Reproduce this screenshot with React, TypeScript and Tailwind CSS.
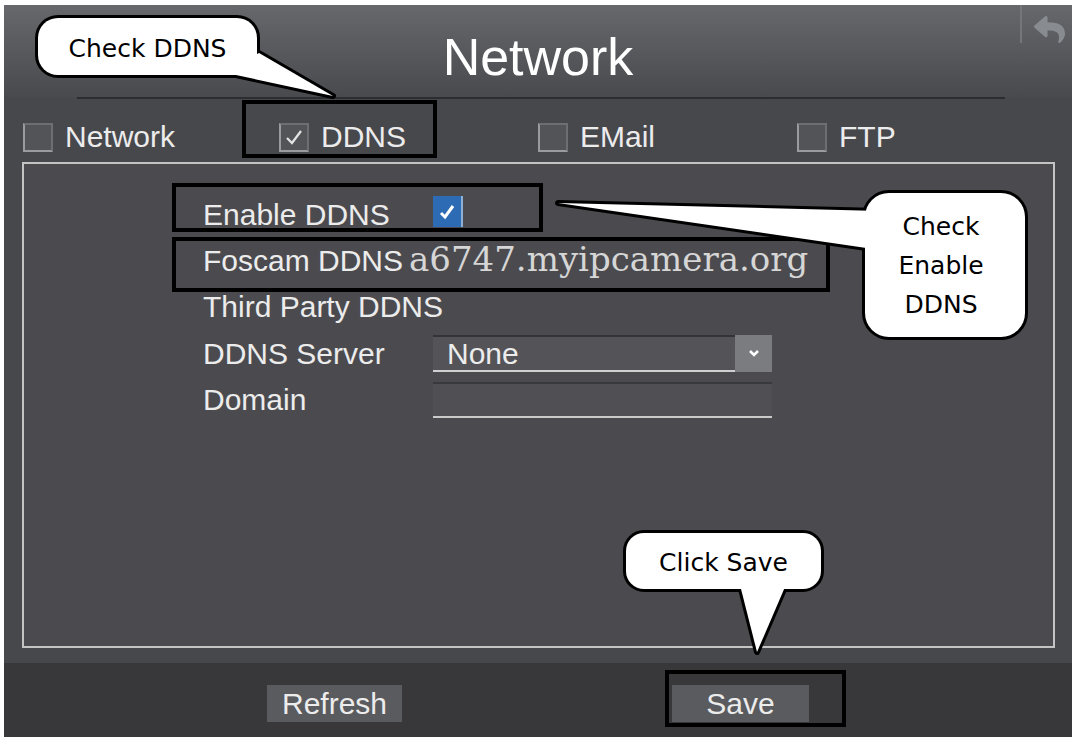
import { FaReply } from 'react-icons/fa';

// shared label style for the device UI text
const label = "font-['Liberation_Sans',Arial,sans-serif] text-[30px] leading-none text-[#ececec] whitespace-nowrap";
const callout = "font-['DejaVu_Sans',Verdana,sans-serif] text-[25px] leading-none text-black whitespace-nowrap";

function TabBox({ checked }: { checked?: boolean }) {
  return (
    <div className="flex h-[29px] w-[30px] shrink-0 items-center justify-center border-2 border-[#6d6e72] border-b-[#9a9b9f] border-l-[#9a9b9f] bg-[#535458]">
      {checked && (
        <svg width="22" height="20" viewBox="0 0 22 20">
          <polyline points="4,11 9,16 18,4" fill="none" stroke="#e4e4e4" strokeWidth="2.2" />
        </svg>
      )}
    </div>
  );
}

function Tab({ text, checked, highlight }: { text: string; checked?: boolean; highlight?: boolean }) {
  return (
    <div className="relative flex items-center gap-3">
      {highlight && (
        <div className="absolute left-[-37px] top-[-22px] h-[58px] w-[195px] border-4 border-black" />
      )}
      <TabBox checked={checked} />
      <span className={label}>{text}</span>
    </div>
  );
}

// callout bubbles: body rect + tail polygon, drawn as a union outline
const bodies = [
  { x: 38, y: 18, w: 219, h: 57, r: 20 },
  { x: 865, y: 193, w: 160, h: 144, r: 24 },
  { x: 626, y: 533, w: 195, h: 56, r: 18 },
];
const tails = ['245,60 259,53 333,96 236,75', '558,203 880,211 880,250', '740,585 788,580 757,652'];

function Callouts() {
  return (
    <>
      <svg className="pointer-events-none absolute left-0 top-0" width="1075" height="737" viewBox="0 0 1075 737">
        <g fill="black" stroke="black" strokeWidth="6" strokeLinejoin="round">
          {bodies.map((b, i) => (
            <rect key={i} x={b.x} y={b.y} width={b.w} height={b.h} rx={b.r} />
          ))}
          {tails.map((t, i) => (
            <polygon key={i} points={t} />
          ))}
        </g>
        <g fill="white">
          {bodies.map((b, i) => (
            <rect key={i} x={b.x} y={b.y} width={b.w} height={b.h} rx={b.r} />
          ))}
          {tails.map((t, i) => (
            <polygon key={i} points={t} />
          ))}
        </g>
      </svg>
      <div className={`absolute left-[38px] top-[18px] flex h-[57px] w-[219px] items-center justify-center pt-[4px] ${callout}`}>
        Check DDNS
      </div>
      <div className="absolute left-[865px] top-[193px] flex h-[144px] w-[160px] flex-col items-center justify-center pr-[8px] font-['DejaVu_Sans',Verdana,sans-serif] text-[25px] leading-[39px] text-black">
        <span>Check</span>
        <span>Enable</span>
        <span>DDNS</span>
      </div>
      <div className={`absolute left-[626px] top-[533px] flex h-[56px] w-[195px] items-center justify-center pt-[2px] ${callout}`}>
        Click Save
      </div>
    </>
  );
}

export default function App() {
  return (
    <div className="relative h-[737px] w-[1075px] overflow-hidden bg-white pl-[4px] pt-[5px]">
      <div className="flex h-[732px] w-[1068px] flex-col bg-[#47484c]">
        {/* header */}
        <div className="grid h-[92px] grid-cols-[1fr_auto_1fr] bg-linear-to-b from-[#66686c] to-[#494a4e]">
          <div />
          <div className="pt-[26px] font-['Liberation_Sans',Arial,sans-serif] text-[52px] leading-none text-white">
            Network
          </div>
          <div className="flex items-start justify-end pr-[7px]">
            <div className="h-[38px] w-[2px] bg-[#74767a]" />
            <FaReply className="ml-[12px] mt-[9px] text-[#888b8f]" size={31} />
          </div>
        </div>
        <div className="ml-[73px] h-[2px] w-[928px] bg-[#2c2d30]" />

        {/* tabs */}
        <div className="grid h-[63px] grid-cols-[256px_259px_259px_259px] items-start pl-[19px] pt-[23px]">
          <Tab text="Network" />
          <Tab text="DDNS" checked highlight />
          <Tab text="EMail" />
          <Tab text="FTP" />
        </div>

        {/* content */}
        <div className="ml-[18px] flex h-[486px] w-[1033px] flex-col border-2 border-[#c4c4c4] bg-[#4b4b4f] pl-[148px] pt-[19px]">
          <div className="flex h-[49px] w-[371px] items-start border-4 border-black pl-[27px]">
            <span className={`mt-[13px] w-[230px] ${label}`}>Enable DDNS</span>
            <div className="mt-[9px] flex h-[31px] w-[30px] items-center justify-center border-r-2 border-[#8fb0d6] bg-[#2d6cb4]">
              <svg width="18" height="18" viewBox="0 0 18 18">
                <polyline points="3,10 7,14 15,3" fill="none" stroke="white" strokeWidth="3" />
              </svg>
            </div>
          </div>

          <div className="mt-[5px] flex h-[55px] w-[658px] items-baseline border-4 border-black pl-[27px] pt-[1px]">
            <span className={label}>Foscam DDNS</span>
            <span className="ml-[6px] whitespace-nowrap font-['DejaVu_Serif',Georgia,serif] text-[34px] leading-none text-[#d6d6d6]">
              a6747.myipcamera.org
            </span>
          </div>

          <div className={`ml-[31px] h-[30px] ${label}`}>Third Party DDNS</div>

          <div className="ml-[31px] mt-[13px] flex h-[37px] items-center">
            <span className={`w-[230px] ${label}`}>DDNS Server</span>
            <div className="flex h-[37px] w-[339px]">
              <div className="flex flex-1 items-center border-b-2 border-t-2 border-b-[#cfcfcf] border-t-[#333437] bg-[#545458] pl-[14px]">
                <span className={`${label} text-[29px]`}>None</span>
              </div>
              <div className="flex w-[37px] items-center justify-center bg-[#7b7c80]">
                <svg width="12" height="9" viewBox="0 0 12 9">
                  <polyline points="2,2 6,6 10,2" fill="none" stroke="white" strokeWidth="2.5" />
                </svg>
              </div>
            </div>
          </div>

          <div className="ml-[31px] mt-[10px] flex h-[36px] items-center">
            <span className={`w-[230px] ${label}`}>Domain</span>
            <div className="h-[36px] w-[339px] border-b-2 border-t-2 border-b-[#cacaca] border-t-[#38393c] bg-[#505054]" />
          </div>
        </div>

        {/* footer */}
        <div className="mt-[15px] flex flex-1 items-start bg-[#38383b]">
          <div className={`ml-[263px] mt-[22px] flex h-[37px] w-[135px] items-center justify-center bg-[#5a5b5f] ${label}`}>
            Refresh
          </div>
          <div className="ml-[263px] mt-[7px] h-[57px] w-[181px] border-4 border-black">
            <div className={`ml-[3px] mt-[11px] flex h-[37px] w-[137px] items-center justify-center bg-[#5a5b5f] ${label}`}>
              Save
            </div>
          </div>
        </div>
      </div>

      <Callouts />
    </div>
  );
}
